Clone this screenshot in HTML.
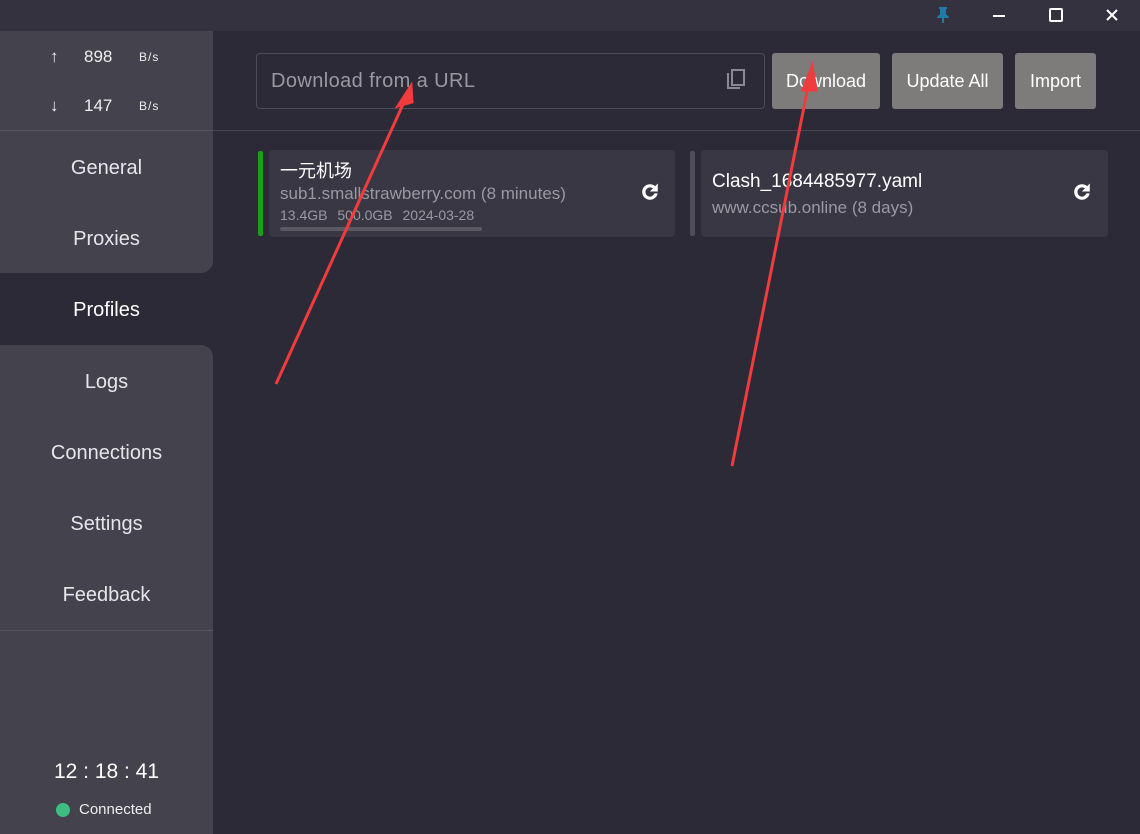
<!DOCTYPE html>
<html><head><meta charset="utf-8"><style>
*{margin:0;padding:0;box-sizing:border-box}
body{width:1140px;height:834px;background:#2c2a37;font-family:"Liberation Sans","Noto Sans CJK SC",sans-serif;position:relative;overflow:hidden;color:#fff}
.tb{position:absolute;left:0;top:0;width:1140px;height:31px;background:#33323e}
.sb{position:absolute;left:0;top:31px;width:213px;height:803px;background:#2c2a37}
.blk{position:absolute;left:0;width:213px;background:#43424d}
.nav{position:absolute;left:0;width:213px;text-align:center;font-size:20px;color:#e6e6ea}
.card{position:absolute;background:#393744;border-radius:4px}
.btn{position:absolute;top:53px;height:56px;background:#7d7c7a;border-radius:3px;color:#fff;font-size:18px;text-align:center;line-height:56px}
</style></head><body>
<div class="tb">
<svg style="position:absolute;left:935px;top:6px" width="16" height="18" viewBox="0 0 16 18"><path d="M4 1h8v2h-1v5l3 3v1H9v5H7v-5H2v-1l3-3V3H4z" fill="#1f7aa6"/></svg>
<div style="position:absolute;left:993px;top:15px;width:12px;height:2px;background:#fff"></div>
<div style="position:absolute;left:1049px;top:8px;width:14px;height:14px;border:2px solid #fff;border-radius:2px"></div>
<svg style="position:absolute;left:1106px;top:9px" width="12" height="12"><path d="M1 1L11 11M11 1L1 11" stroke="#fff" stroke-width="2"/></svg>
</div>
<div class="sb">
<div class="blk" style="top:0;height:99px"></div>
<div class="blk" style="top:100px;height:142px;border-bottom-right-radius:12px"></div>
<div class="blk" style="top:314px;height:285px;border-top-right-radius:12px"></div>
<div class="blk" style="top:600px;height:203px"></div>
<div style="position:absolute;left:0;top:99px;width:213px;height:1px;background:#55545e"></div>
<div style="position:absolute;left:0;top:599px;width:213px;height:1px;background:#55545e"></div>
<div style="position:absolute;top:16px;left:50px;font-size:17px;color:#eee">↑</div>
<div style="position:absolute;top:16px;left:84px;font-size:17px;color:#eee">898</div>
<div style="position:absolute;top:19px;left:139px;font-size:12px;color:#eee;letter-spacing:1px">B/s</div>
<div style="position:absolute;top:65px;left:50px;font-size:17px;color:#eee">↓</div>
<div style="position:absolute;top:65px;left:84px;font-size:17px;color:#eee">147</div>
<div style="position:absolute;top:68px;left:139px;font-size:12px;color:#eee;letter-spacing:1px">B/s</div>
<div class="nav" style="top:126px">General</div>
<div class="nav" style="top:197px">Proxies</div>
<div class="nav" style="top:268px;color:#fff">Profiles</div>
<div class="nav" style="top:340px">Logs</div>
<div class="nav" style="top:411px">Connections</div>
<div class="nav" style="top:482px">Settings</div>
<div class="nav" style="top:553px">Feedback</div>
<div style="position:absolute;top:729px;left:0;width:213px;text-align:center;font-size:21px;color:#fff">12 : 18 : 41</div>
<div style="position:absolute;top:772px;left:56px;width:14px;height:14px;border-radius:50%;background:#3dbd82"></div>
<div style="position:absolute;top:770px;left:79px;font-size:15px;color:#eee">Connected</div>
</div>
<div style="position:absolute;left:213px;top:130px;width:927px;height:1px;background:#45444e"></div>
<div style="position:absolute;left:256px;top:53px;width:509px;height:56px;border:1px solid #4c4b56;border-radius:4px"></div>
<div style="position:absolute;left:271px;top:70px;font-size:20px;color:#9a99a2;letter-spacing:0.4px">Download from a URL</div>
<svg style="position:absolute;left:726px;top:69px" width="20" height="22" viewBox="0 0 20 22"><path d="M2 4v15h12" fill="none" stroke="#8a8992" stroke-width="2"/><rect x="6" y="1" width="12" height="15" fill="none" stroke="#8a8992" stroke-width="2"/></svg>
<div class="btn" style="left:772px;width:108px">Download</div>
<div class="btn" style="left:892px;width:111px">Update All</div>
<div class="btn" style="left:1015px;width:81px">Import</div>
<div style="position:absolute;left:258px;top:151px;width:5px;height:85px;background:#18a018;border-radius:2px"></div>
<div class="card" style="left:269px;top:150px;width:406px;height:87px"></div>
<div style="position:absolute;left:280px;top:157px;font-size:18px;color:#fff">一元机场</div>
<div style="position:absolute;left:280px;top:184px;font-size:17px;color:#9a99a2">sub1.smallstrawberry.com (8 minutes)</div>
<div style="position:absolute;left:280px;top:207px;font-size:14px;color:#9a99a2;word-spacing:6px">13.4GB 500.0GB 2024-03-28</div>
<div style="position:absolute;left:280px;top:227px;width:202px;height:4px;background:#5a5862;border-radius:2px"></div>
<div style="position:absolute;left:690px;top:151px;width:5px;height:85px;background:#4f4e58;border-radius:2px"></div>
<div class="card" style="left:701px;top:150px;width:407px;height:87px"></div>
<div style="position:absolute;left:712px;top:171px;font-size:19px;color:#fff">Clash_1684485977.yaml</div>
<div style="position:absolute;left:712px;top:198px;font-size:17px;color:#9a99a2">www.ccsub.online (8 days)</div>
<svg style="position:absolute;left:639px;top:181px" width="22" height="22" viewBox="0 0 24 24"><path d="M17.65 6.35A7.96 7.96 0 0 0 12 4a8 8 0 1 0 7.73 10h-2.6A5.5 5.5 0 1 1 12 6.5c1.5 0 2.9.6 3.9 1.6L13 11h7V4z" fill="#fff" stroke="#fff" stroke-width="1"/></svg>
<svg style="position:absolute;left:1071px;top:181px" width="22" height="22" viewBox="0 0 24 24"><path d="M17.65 6.35A7.96 7.96 0 0 0 12 4a8 8 0 1 0 7.73 10h-2.6A5.5 5.5 0 1 1 12 6.5c1.5 0 2.9.6 3.9 1.6L13 11h7V4z" fill="#fff" stroke="#fff" stroke-width="1"/></svg>
<svg style="position:absolute;left:0;top:0" width="1140" height="834">
<path d="M276 384L405 100" stroke="#f03c3c" stroke-width="3"/>
<path d="M411 86L398 106L412 102z" fill="#f03c3c" stroke="#f03c3c" stroke-width="3"/>
<path d="M732 466L809 82" stroke="#f03c3c" stroke-width="3"/>
<path d="M812 67L803 90L816 90z" fill="#f03c3c" stroke="#f03c3c" stroke-width="3"/>
</svg>
</body></html>
